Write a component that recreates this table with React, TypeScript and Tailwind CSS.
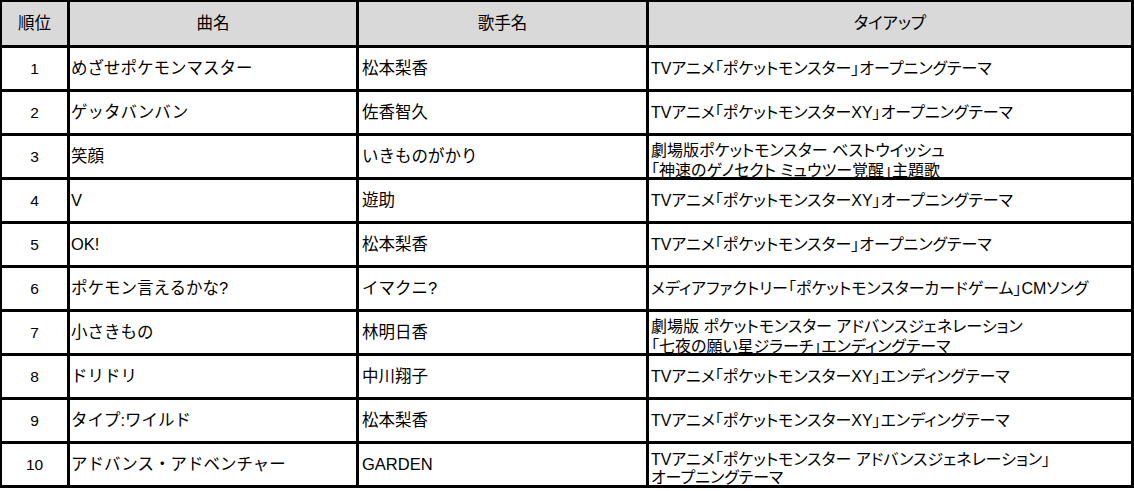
import React from "react";

type Row = { rank: string; song: string; artist: string; tie: string[] };

const rows: Row[] = [
  { rank: "1", song: "めざせポケモンマスター", artist: "松本梨香", tie: ["TVアニメ「ポケットモンスター」オープニングテーマ"] },
  { rank: "2", song: "ゲッタバンバン", artist: "佐香智久", tie: ["TVアニメ「ポケットモンスターXY」オープニングテーマ"] },
  { rank: "3", song: "笑顔", artist: "いきものがかり", tie: ["劇場版ポケットモンスター ベストウイッシュ", "「神速のゲノセクト ミュウツー覚醒」主題歌"] },
  { rank: "4", song: "V", artist: "遊助", tie: ["TVアニメ「ポケットモンスターXY」オープニングテーマ"] },
  { rank: "5", song: "OK!", artist: "松本梨香", tie: ["TVアニメ「ポケットモンスター」オープニングテーマ"] },
  { rank: "6", song: "ポケモン言えるかな?", artist: "イマクニ?", tie: ["メディアファクトリー「ポケットモンスターカードゲーム」CMソング"] },
  { rank: "7", song: "小さきもの", artist: "林明日香", tie: ["劇場版 ポケットモンスター アドバンスジェネレーション", "「七夜の願い星ジラーチ」エンディングテーマ"] },
  { rank: "8", song: "ドリドリ", artist: "中川翔子", tie: ["TVアニメ「ポケットモンスターXY」エンディングテーマ"] },
  { rank: "9", song: "タイプ:ワイルド", artist: "松本梨香", tie: ["TVアニメ「ポケットモンスターXY」エンディングテーマ"] },
  { rank: "10", song: "アドバンス・アドベンチャー", artist: "GARDEN", tie: ["TVアニメ「ポケットモンスター アドバンスジェネレーション」", "オープニングテーマ"] },
];

const font = "font-['Liberation_Sans','Noto_Sans_CJK_JP',sans-serif]";

export default function App() {
  return (
    <div className={`w-[1134px] h-[491px] bg-white ${font} text-black`}>
      <div className="grid grid-cols-[65px_286px_287px_1fr] grid-rows-[43px_repeat(10,41px)] gap-[3px] bg-black pt-[2px] pl-[2px] pr-[3px] pb-[3px] w-[1134px]">
        <div className="bg-[#d9d9d9] flex items-center justify-center text-[16.5px] [font-feature-settings:'palt']">順位</div>
        <div className="bg-[#d9d9d9] flex items-center justify-center text-[16.5px] [font-feature-settings:'palt']">曲名</div>
        <div className="bg-[#d9d9d9] flex items-center justify-center text-[16.5px] [font-feature-settings:'palt']">歌手名</div>
        <div className="bg-[#d9d9d9] flex items-center justify-center text-[16.5px] [font-feature-settings:'palt']">タイアップ</div>
        {rows.map((r, i) => {
          const two = r.tie.length > 1;
          const last = i === rows.length - 1;
          return (
            <React.Fragment key={r.rank}>
              <div className="bg-white flex items-center justify-center text-[15.5px]">{r.rank}</div>
              <div className="bg-white flex items-center pl-[1px] text-[16.5px] whitespace-nowrap">{r.song}</div>
              <div className="bg-white flex items-center pl-[3px] text-[16.5px] whitespace-nowrap">{r.artist}</div>
              <div
                className={`bg-white flex flex-col justify-center pl-[2px] text-[16px] [font-feature-settings:'palt'] whitespace-nowrap overflow-hidden ${
                  two ? (last ? "leading-[18px] pt-[8px]" : "leading-[20px] pt-[8px]") : "leading-[20px]"
                }`}
              >
                {r.tie.map((t) => (
                  <span key={t}>{t}</span>
                ))}
              </div>
            </React.Fragment>
          );
        })}
      </div>
    </div>
  );
}
